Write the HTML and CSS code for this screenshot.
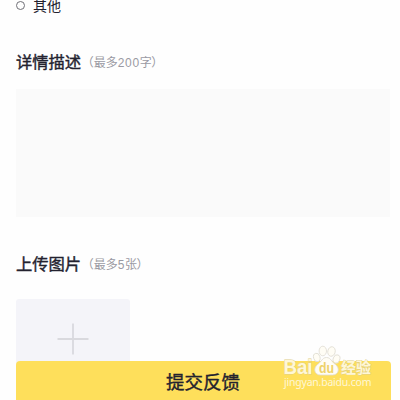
FILE: index.html
```html
<!DOCTYPE html>
<html lang="zh-CN">
<head>
<meta charset="utf-8">
<title>反馈</title>
<link rel="stylesheet" href="styles.css">
</head>
<body>
<main class="page">
  <div class="option"><span class="radio"></span><span>其他</span></div>
  <div class="heading heading-detail"><h2>详情描述</h2><span class="hint">（最多<span class="num">200</span>字<span class="close">）</span></span></div>
  <div class="textarea"></div>
  <div class="heading heading-upload"><h2>上传图片</h2><span class="hint">（最多<span class="num">5</span>张<span class="close">）</span></span></div>
  <div class="upload">
    <svg width="32" height="32" viewBox="0 0 32 32"><path d="M16 .5v31M.5 16h31" stroke="#d9d9de" stroke-width="1.8"/></svg>
  </div>
</main>
<div class="submit">提交反馈</div>
<div class="watermark">
  <svg width="104" height="50" viewBox="0 0 104 50">
    <g class="paw">
      <ellipse cx="42.800" cy="16.500" rx="3.200" ry="4.300" transform="rotate(-15 42.800 16.500)"/>
      <ellipse cx="48.800" cy="10" rx="3.700" ry="4.800"/>
      <ellipse cx="57.500" cy="10.500" rx="3.700" ry="4.800" transform="rotate(12 57.500 10.500)"/>
      <ellipse cx="62.500" cy="18" rx="3.300" ry="4.300" transform="rotate(20 62.500 18)"/>
      <path d="M52.500 16.500C48 16.500 47.500 21 43.500 23.500C39 27 40 34 46.500 34H58.500C65 34 66 27 61.500 23.500C57.500 21 57 16.500 52.500 16.500Z"/>
    </g>
    <text class="brand" x="9.500" y="33" textLength="29" lengthAdjust="spacingAndGlyphs">Bai</text>
    <text class="du" x="45" y="31.500" textLength="15" lengthAdjust="spacingAndGlyphs">du</text>
    <text class="cn" x="67" y="31.500" textLength="30">经验</text>
    <text class="site" x="10" y="45" textLength="87.500">jingyan.baidu.com</text>
  </svg>
</div>
</body>
</html>
```
FILE: styles.css
```css
* { box-sizing: border-box; }
body {
  margin: 0;
  width: 400px;
  height: 400px;
  overflow: hidden;
  position: relative;
  background: #fefefe;
  color: #23222f;
  font-family: "Liberation Sans", "Noto Sans CJK SC", sans-serif;
}
.page { padding: 0 10px 0 15.5px; }
.option {
  display: flex;
  align-items: center;
  height: 11px;
  gap: 8.5px;
  font-size: 14px;
  line-height: 20px;
}
.radio {
  width: 9px;
  height: 9px;
  border: 1px solid #707077;
  border-radius: 50%;
}
.heading {
  display: flex;
  align-items: center;
  height: 24px;
  padding-left: 0.5px;
}
.heading-detail { margin-top: 39px; }
.heading-upload { margin-top: 35px; }
h2 {
  margin: 0;
  font-size: 16.3px;
  line-height: 24px;
  font-weight: 400;
  -webkit-text-stroke: 0.4px #23222f;
}
.hint {
  margin-left: 0.5px;
  padding-top: 1px;
  font-size: 12px;
  line-height: 24px;
  color: #9a9aa3;
  white-space: nowrap;
}
.num { letter-spacing: 0.7px; }
.close { margin-left: -0.5px; }
.textarea {
  height: 128px;
  margin-top: 15px;
  background: #fafafa;
}
.upload {
  width: 114.5px;
  height: 80px;
  margin-top: 23px;
  padding-top: 24px;
  background: #f4f4f9;
  border-radius: 3px;
  text-align: center;
}
.submit {
  position: absolute;
  left: 15.5px;
  right: 9.5px;
  top: 360.5px;
  height: 44px;
  border-radius: 4px 4px 0 0;
  background: #fedf5b;
  font-size: 18.5px;
  font-weight: 400;
  line-height: 44px;
  text-align: center;
  -webkit-text-stroke: 0.4px #23222f;
}
.watermark {
  position: absolute;
  left: 274px;
  top: 341px;
}
.watermark svg { display: block; }
.paw { fill: #fffdf5; stroke: #dedbd0; stroke-width: 0.8; }
.brand, .cn, .site { fill: #fff7d6; }
.brand, .cn { stroke: #e0cf8c; stroke-width: 0.8; paint-order: stroke; }
.brand { font-size: 20px; font-weight: 700; }
.du { font-size: 14px; font-weight: 700; fill: #eed269; }
.cn { font-size: 15px; font-weight: 700; }
.site { font-size: 10.5px; font-family: "Noto Sans", sans-serif; }
```
